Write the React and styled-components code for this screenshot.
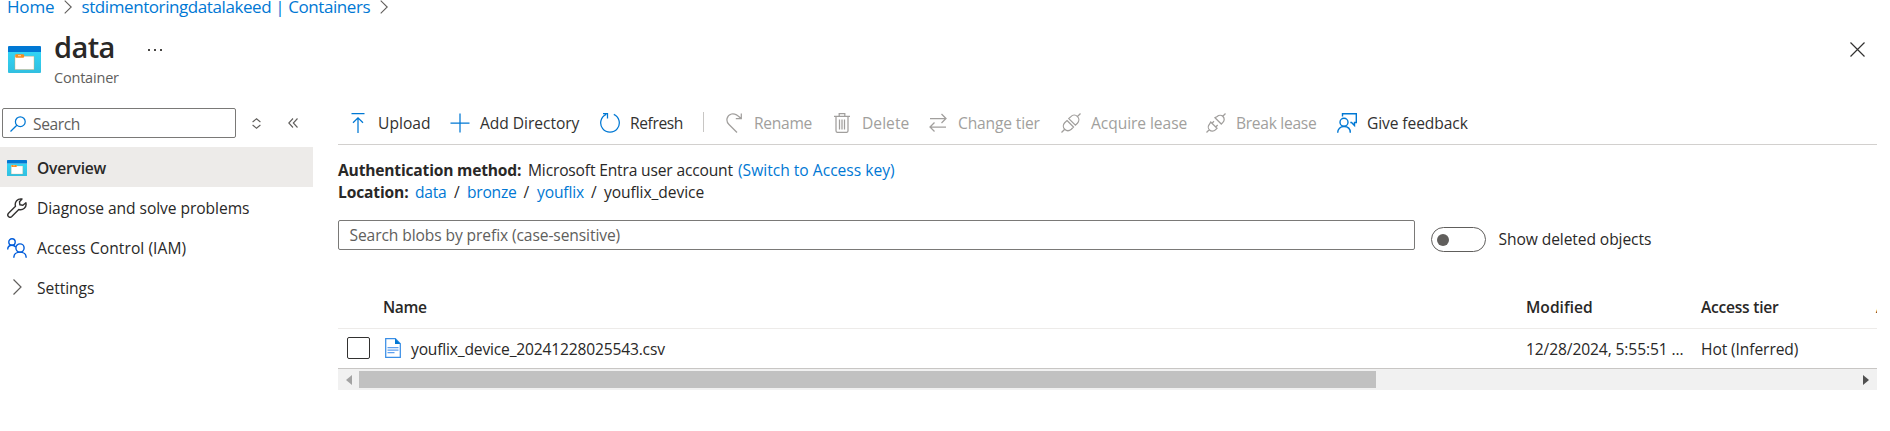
import React from 'react';
import styled, { createGlobalStyle } from 'styled-components';

const Global = createGlobalStyle`
  * { box-sizing: border-box; }
  html, body { margin: 0; background: #fff; overflow: hidden; }
  body { font-family: 'Open Sans', 'Noto Sans', sans-serif; font-size: 15.6px; color: #292827; }
`;

const Text = styled.span`
  display: block;
  flex: none;
  width: ${(p) => (p.$w ? `${p.$w}px` : 'auto')};
  font-size: ${(p) => p.$size || 15.6}px;
  font-weight: ${(p) => p.$weight || 400};
  letter-spacing: ${(p) => p.$track || 0}px;
  line-height: ${(p) => p.$lh || 22}px;
  color: ${(p) => p.$color || 'inherit'};
  white-space: pre;
`;
const LinkText = styled(Text).attrs({ as: 'a' })`
  color: #0078d4;
`;

const Page = styled.div`
  width: 1890px;
  height: 431px;
  overflow: hidden;
`;
const Breadcrumb = styled.nav`
  display: flex;
  align-items: flex-start;
  height: 30px;
  padding-left: 7px;
`;
const CrumbArrow = styled.span`
  display: flex;
  width: 26.5px;
  height: 15px;
  padding-left: 8.5px;
`;
const Header = styled.header`
  display: flex;
  height: 74px;
  padding-left: 8px;
`;
const HeaderIcon = styled.div`
  width: 46px;
  padding-top: 16px;
`;
const Titles = styled.div`
  width: 94px;
`;
const Title = styled.h1`
  margin: 0;
  height: 36px;
  font-size: 29px;
  font-weight: 600;
  letter-spacing: -0.6px;
  line-height: 34px;
`;
const Dots = styled.div`
  display: flex;
  gap: 4px;
  padding-top: 19px;
  i { width: 2px; height: 2px; background: #484644; }
`;
const CloseButton = styled.button`
  margin: 12px 25px 0 auto;
  padding: 0;
  width: 15px;
  height: 15px;
  border: 0;
  background: none;
  display: flex;
`;
const Body = styled.div`
  display: flex;
`;
const Sidebar = styled.aside`
  width: 313px;
  flex: none;
`;
const MenuTools = styled.div`
  display: flex;
  align-items: center;
  height: 43px;
  padding: 0 0 5px 2px;
`;
const MenuSearch = styled.div`
  display: flex;
  align-items: center;
  width: 234px;
  height: 30px;
  margin-right: 16px;
  padding: 1px 0 0 7px;
  gap: 7px;
  border: 1px solid #7a7977;
  border-radius: 2px;
`;
const CollapseSlot = styled.span`
  display: flex;
  margin-left: 27px;
`;
const MenuItem = styled.div`
  display: flex;
  align-items: center;
  height: 40px;
  padding: 2px 0 0 7px;
  gap: 10px;
  background: ${(p) => (p.$active ? '#edebe9' : 'transparent')};
`;
const Main = styled.main`
  margin-left: 25px;
  width: 1539px;
  flex: none;
`;
const Toolbar = styled.div`
  display: flex;
  align-items: center;
  height: 41px;
  padding-bottom: 2px;
  border-bottom: 1px solid #d2d0ce;
`;
const Command = styled.button`
  display: flex;
  align-items: center;
  flex: none;
  width: ${(p) => p.$w}px;
  padding: 0 0 0 ${(p) => p.$pad || 0}px;
  border: 0;
  background: none;
  font-family: inherit;
  text-align: left;
  color: ${(p) => (p.$disabled ? '#a19f9d' : '#323130')};
  svg { flex: none; margin-right: ${(p) => p.$gap}px; }
`;
const Divider = styled.span`
  width: 1px;
  height: 20px;
  margin: 0 22px 2px 0;
  background: #c8c6c4;
`;
const Info = styled.div`
  height: 75px;
  padding-top: 14px;
`;
const InfoLine = styled.div`
  display: flex;
  height: 22px;
`;
const Filters = styled.div`
  display: flex;
  height: 64px;
`;
const PrefixInput = styled.div`
  width: 1077px;
  height: 30px;
  padding: 3px 0 0 10.5px;
  border: 1px solid #7a7977;
  border-radius: 2px;
`;
const Toggle = styled.div`
  display: flex;
  align-items: center;
  width: 55px;
  height: 25px;
  margin: 7px 12.500px 0 16px;
  padding-left: 5px;
  border: 1px solid #605e5c;
  border-radius: 13px;
  &::before { content: ''; width: 12px; height: 12px; border-radius: 50%; background: #605e5c; }
`;
const ToggleLabel = styled.div`
  padding-top: 8px;
`;
const Row = styled.div`
  display: grid;
  grid-template-columns: 45px 1143px 175px 175px 1px;
  align-items: center;
  overflow: hidden;
  height: ${(p) => p.$h}px;
  padding-top: ${(p) => p.$pt || 0}px;
  border-bottom: 1px solid ${(p) => p.$line};
`;
const FileCell = styled.div`
  display: flex;
  align-items: center;
  gap: 10px;
  padding-left: 2px;
  svg { margin-top: -2px; }
`;
const Checkbox = styled.span`
  width: 23px;
  height: 22px;
  margin: -2px 0 0 9px;
  border: 1px solid #323130;
  border-radius: 2px;
`;
const ScrollBar = styled.div`
  display: flex;
  align-items: center;
  height: 21px;
  padding: 0 8px;
  background: #f1f1f1;
`;
const Thumb = styled.div`
  width: 1017px;
  height: 17px;
  margin: 0 auto 0 7px;
  background: #c1c1c1;
`;

const Svg = ({ w = 20, h = 20, sw = 1.25, color = '#0078d4', children }) => (
  <svg width={w} height={h} viewBox={`0 0 ${w} ${h}`} fill="none" stroke={color} strokeWidth={sw}>{children}</svg>
);
const Chevron = () => (
  <Svg w={8} h={14} sw={1.1} color="#605e5c"><path d="M.7 .7L7.2 7L.7 13.3" /></Svg>
);
const ContainerIcon = ({ w, h, id }) => (
  <svg width={w} height={h} viewBox="0 0 33 27" preserveAspectRatio="none">
    <defs>
      <linearGradient id={id} x1="0" y1="0" x2="0" y2="1">
        <stop offset="0" stopColor="#32d4f5" /><stop offset="1" stopColor="#31bfe0" />
      </linearGradient>
    </defs>
    <path d="M0 6h33v20a1 1 0 0 1-1 1H1a1 1 0 0 1-1-1z" fill={`url(#${id})`} />
    <path d="M1 0h31a1 1 0 0 1 1 1v5H0V1a1 1 0 0 1 1-1z" fill="#0078d4" />
    <path d="M7 9h8l1.600 1.300H26v13.200H7z" fill="#fff" stroke="#e9a25c" strokeWidth=".4" />
    <path d="M8 8.300h7.500l.700.700v2l-.800.800H8l-.800-.800V9z" fill="#f78d1e" />
    <path d="M10 9.700h3" stroke="#ffd9a8" strokeWidth="1" />
  </svg>
);
const Plug = ({ open }) => (
  <Svg color="#a19f9d">
    {open ? (
      <path d="M.5 19.5l2.700-2.700M16.800 3.200L19.500.5M4.700 9l6.300 6.300-1.600 1.600c-1.700 1.700-4.300 1.700-5.900.100s-1.600-4.200 0-5.800zM9 4.700l6.300 6.300 1.600-1.600c1.700-1.700 1.700-4.300.100-5.900s-4.200-1.600-5.800 0zM6 10.300l2-2M9.700 14l2-2" />
    ) : (
      <path d="M.5 19.500l3-3M16.500 3.500l3-3M6 7.500l6.500 6.500-2.200 2.200c-2 1.800-4.800 1.800-6.600 0s-1.800-4.600 0-6.500zM7.800 5.600l6.600 6.600 2-2c1.900-2 1.900-4.800.100-6.600s-4.700-1.900-6.600 0z" />
    )}
  </Svg>
);

export default function App() {
  return (
    <Page>
      <Global />
      <Breadcrumb>
        <LinkText $w={48} $size={17} $track={-0.17} $lh={14}>Home</LinkText>
        <CrumbArrow><Chevron /></CrumbArrow>
        <LinkText $w={290} $size={17} $track={-0.415} $lh={14}>stdimentoringdatalakeed | Containers</LinkText>
        <CrumbArrow><Chevron /></CrumbArrow>
      </Breadcrumb>
      <Header>
        <HeaderIcon><ContainerIcon w={33} h={27} id="headerFill" /></HeaderIcon>
        <Titles>
          <Title>data</Title>
          <Text $size={14.5} $track={-0.2} $color="#605e5c" $lh={23}>Container</Text>
        </Titles>
        <Dots><i /><i /><i /></Dots>
        <CloseButton aria-label="Close">
          <Svg w={15} h={15} color="#323130" sw={1.2}><path d="M.5.5l14 14M14.500.5l-14 14" /></Svg>
        </CloseButton>
      </Header>
      <Body>
        <Sidebar>
          <MenuTools>
            <MenuSearch>
              <Svg w={16} h={16}><circle cx="10.300" cy="5.700" r="4.900" /><path d="M6.800 9.200L.5 15.500" /></Svg>
              <Text $track={-0.4} $color="#605e5c">Search</Text>
            </MenuSearch>
            <Svg w={9} h={11} sw={1.1} color="#605e5c"><path d="M.6 4L4.500.8 8.400 4M.6 7l3.900 3.200L8.400 7" /></Svg>
            <CollapseSlot>
              <Svg w={10} h={10} sw={1.1} color="#605e5c"><path d="M5 .5L.8 5 5 9.500M9.500.5L5.300 5l4.200 4.500" /></Svg>
            </CollapseSlot>
          </MenuTools>
          <MenuItem $active>
            <ContainerIcon w={20} h={16} id="menuFill" />
            <Text $weight={600} $track={-0.2}>Overview</Text>
          </MenuItem>
          <MenuItem>
            <Svg color="#323130" sw={1.4}><path d="M1.500 15.200l7-7C7.300 4.200 10.500.200 15 1l-2.500 2.800.4 3 3 .4L18.900 4.800C20 9.200 16 12.600 11.800 11.500l-7 7c-2.300 2.100-5.400-.900-3.300-3.300z" strokeLinejoin="round" /></Svg>
            <Text $track={-0.065}>Diagnose and solve problems</Text>
          </MenuItem>
          <MenuItem>
            <Svg color="#015cda" sw={1.4}><circle cx="5" cy="4" r="3.200" /><circle cx="13" cy="10" r="4.100" /><path d="M.7 11.500C.7 9 2.500 7.200 5 7.200c1.500 0 2.900.7 3.700 1.800M6.800 19.700c0-3.400 2.700-5.600 6.200-5.600s6.200 2.200 6.200 5.600" /></Svg>
            <Text $track={0.06}>Access Control (IAM)</Text>
          </MenuItem>
          <MenuItem>
            <Svg color="#605e5c" sw={1.2}><path d="M6.500 1.500l7.500 7.500-7.500 7.500" /></Svg>
            <Text $track={-0.05}>Settings</Text>
          </MenuItem>
        </Sidebar>
        <Main>
          <Toolbar>
            <Command $w={112} $pad={13} $gap={13}>
              <Svg w={14}><path d="M.5 .7h13M7 20V5M2 9.800L7 4.800l5 5" /></Svg>
              <Text $track={0.022}>Upload</Text>
            </Command>
            <Command $w={150} $gap={10}>
              <Svg><path d="M.5 10h19M10 .5v19" /></Svg>
              <Text $track={-0.05}>Add Directory</Text>
            </Command>
            <Command $w={103} $gap={10}>
              <Svg><path d="M6.200 1.400A9.300 9.300 0 1 0 13.800 1.400M3 .7h4.500v4.800" /></Svg>
              <Text $track={-0.4}>Refresh</Text>
            </Command>
            <Divider />
            <Command $w={108} $gap={12} $disabled>
              <Svg w={16} color="#a19f9d"><path d="M11 19.500L3 11.500C-.5 8 .5 2.500 5.500 1c3-.8 5.500.5 9 4M15.300.5v5.200H9.800" /></Svg>
              <Text $track={-0.3}>Rename</Text>
            </Command>
            <Command $w={95} $gap={12} $disabled>
              <Svg w={16} color="#a19f9d"><path d="M0 3.300h16M5.200 3V.7h5.600V3M2 3.500v14.300c0 1 .500 1.600 1.500 1.600h9c1 0 1.500-.6 1.500-1.600V3.500M5.500 6.500v10M8 6.500v10M10.500 6.500v10" /></Svg>
              <Text $track={0.036}>Delete</Text>
            </Command>
            <Command $w={132} $gap={11} $disabled>
              <Svg w={18} color="#a19f9d"><path d="M1 5.500h16M12.500 1L17 5.500 12.500 10M17 14H1M5.500 9.500L1 14l4.500 4.500" /></Svg>
              <Text $track={-0.16}>Change tier</Text>
            </Command>
            <Command $w={145} $gap={10} $disabled>
              <Plug />
              <Text $track={-0.07}>Acquire lease</Text>
            </Command>
            <Command $w={131} $gap={10} $disabled>
              <Plug open />
              <Text $track={-0.29}>Break lease</Text>
            </Command>
            <Command $w={140} $gap={10}>
              <Svg sw={1.4}><circle cx="7" cy="9.300" r="4" /><path d="M.7 19.700C.7 15.800 3.300 13.500 7 13.500s6.300 2.300 6.300 6.200M5.500 3.500V.7h13.800v8.800h-1.800v3l-3-3h-1.200" /></Svg>
              <Text $track={-0.1}>Give feedback</Text>
            </Command>
          </Toolbar>
          <Info>
            <InfoLine>
              <Text $w={190} $weight={700} $track={-0.19}>Authentication method:</Text>
              <Text $w={210} $track={-0.167}>Microsoft Entra user account</Text>
              <LinkText>(Switch to Access key)</LinkText>
            </InfoLine>
            <InfoLine>
              <Text $w={77} $weight={700} $track={-0.14}>Location:</Text>
              <LinkText $w={39} $track={-0.25}>data</LinkText>
              <Text $w={13}>/</Text>
              <LinkText $w={56.5} $track={-0.23}>bronze</LinkText>
              <Text $w={13.5}>/</Text>
              <LinkText $w={54} $track={-0.15}>youflix</LinkText>
              <Text $w={13}>/</Text>
              <Text $track={-0.066}>youflix_device</Text>
            </InfoLine>
          </Info>
          <Filters>
            <PrefixInput><Text $track={-0.1} $color="#605e5c">Search blobs by prefix (case-sensitive)</Text></PrefixInput>
            <Toggle />
            <ToggleLabel><Text $track={-0.09}>Show deleted objects</Text></ToggleLabel>
          </Filters>
          <Row $h={45} $pt={1} $line="#edebe9">
            <span />
            <Text $weight={600} $track={-0.35}>Name</Text>
            <Text $weight={600}>Modified</Text>
            <Text $weight={600} $track={-0.25}>Access tier</Text>
            <Text $weight={600}>A</Text>
          </Row>
          <Row $h={40} $pt={1} $line="#c8c6c4">
            <Checkbox />
            <FileCell>
              <Svg w={16}>
                <path d="M.7.7h9.600l5 5v13.600H.7z" stroke="#3a8ee6" />
                <path d="M10 .5v5.500h5.500z" fill="#0078d4" stroke="none" />
                <path d="M2.500 9.700h11M2.500 12.200h11M2.500 14.700h7" stroke="#5ea0ef" />
              </Svg>
              <Text $track={-0.175}>youflix_device_20241228025543.csv</Text>
            </FileCell>
            <Text $track={-0.11}>12/28/2024, 5:55:51 ...</Text>
            <Text $track={-0.1}>Hot (Inferred)</Text>
            <span />
          </Row>
          <ScrollBar>
            <Svg w={6} h={10}><path d="M6 0v10L0 5z" fill="#a3a3a3" stroke="none" /></Svg>
            <Thumb />
            <Svg w={6} h={10}><path d="M0 0v10l6-5z" fill="#505050" stroke="none" /></Svg>
          </ScrollBar>
        </Main>
      </Body>
    </Page>
  );
}
